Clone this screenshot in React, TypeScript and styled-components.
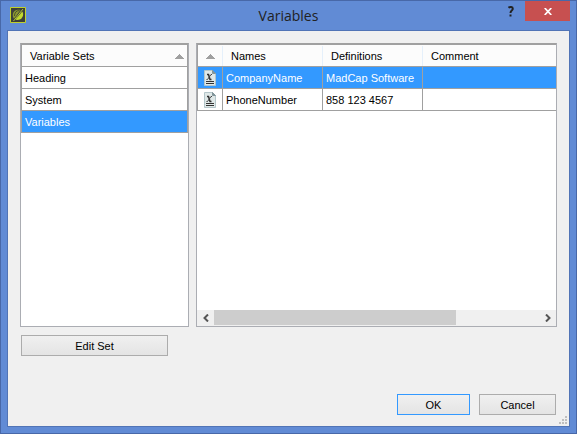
import React, { useState } from "react";
import styled, { createGlobalStyle } from "styled-components";

const GlobalStyle = createGlobalStyle`
  *, *::before, *::after { box-sizing: border-box; }
  body { margin: 0; }
  body, button, table { font-family: "Liberation Sans", Arial, sans-serif; font-size: 11px; line-height: 14px; color: #000; }
`;

const Window = styled.div`
  min-height: 100vh;
  display: flex;
  flex-direction: column;
  background: #618bd5;
  border: 1px solid #4868a8;
  padding: 0 6px 6px;
`;

const TitleBar = styled.header`
  display: grid;
  grid-template-columns: 1fr auto 1fr;
  height: 29px;
`;

const AppMark = styled.svg`
  display: block;
  margin: 6px 0 0 3px;
`;

const Title = styled.h1`
  margin: 0;
  font: 400 14px/29px "Open Sans", "Noto Sans", sans-serif;
  color: #222;
`;

const WindowButtons = styled.div`
  display: flex;
  justify-content: flex-end;
  align-items: flex-start;
`;

const WindowButton = styled.button<{ $close?: boolean }>`
  display: flex;
  align-items: center;
  justify-content: center;
  width: ${(p) => (p.$close ? 45 : 28)}px;
  height: 20px;
  padding: 0;
  border: 0;
  background: ${(p) => (p.$close ? "#c75050" : "transparent")};
`;

const Client = styled.main`
  flex: 1;
  display: flex;
  flex-direction: column;
  background: #f0f0f0;
  border: 1px solid #5174b6;
  padding: 12px 12px 11px 12px;
`;

const Panes = styled.div`
  flex: 1;
  display: flex;
  gap: 7px;
`;

const Pane = styled.section<{ $wide?: boolean }>`
  flex: ${(p) => (p.$wide ? "1 1 0" : "0 0 169px")};
  min-width: 0;
  display: flex;
  flex-direction: column;
  justify-content: space-between;
  background: #fff;
  border: 1px solid #abadb3;
  border-top-color: #a0a0a0;
`;

const Grid = styled.table<{ $wide?: boolean }>`
  width: 100%;
  table-layout: fixed;
  border-spacing: 0;
  border: solid #a0a0a0;
  border-width: 1px ${(p) => (p.$wide ? 0 : 1)}px 0 1px;
`;

const Col = styled.col<{ $width?: number }>`
  width: ${(p) => (p.$width ? `${p.$width}px` : "auto")};
`;

const HeadCell = styled.th`
  height: 22px;
  padding: 1px 3px 0 8px;
  text-align: left;
  font-weight: 400;
  background: linear-gradient(#e5f0fb, #e5f0fb) right 0 top 1px / 1px 100% no-repeat #fcfcfc;
  border-bottom: 1px solid #a0a0a0;
  &:last-child { background: #fcfcfc; }
`;

const HeadContent = styled.div<{ $iconOnly?: boolean }>`
  display: flex;
  align-items: center;
  justify-content: ${(p) => (p.$iconOnly ? "flex-start" : "space-between")};
`;

const Row = styled.tr<{ $selected: boolean }>`
  background: ${(p) => (p.$selected ? "#3399ff" : "#fff")};
  color: ${(p) => (p.$selected ? "#fff" : "#000")};
`;

const Cell = styled.td<{ $icon?: boolean }>`
  height: 22px;
  padding: ${(p) => (p.$icon ? "0 0 0 6px" : "1px 3px 0")};
  white-space: nowrap;
  border: solid #a0a0a0;
  border-width: 0 1px 1px 0;
  &:last-child { border-right: 0; }
`;

const ScrollBar = styled.div`
  display: flex;
  height: 16px;
  padding-bottom: 1px;
  background: #f0f0f0;
`;

const ScrollButton = styled.button`
  width: 17px;
  padding: 0;
  border: 0;
  background: transparent;
  display: flex;
  align-items: center;
  justify-content: center;
`;

const Track = styled.div`
  flex: 1;
`;

const Thumb = styled.div`
  width: 74.5%;
  height: 100%;
  background: #cdcdcd;
`;

const PushButton = styled.button<{ $width: number; $default?: boolean }>`
  width: ${(p) => p.$width}px;
  height: 21px;
  padding: 0;
  border: 1px solid ${(p) => (p.$default ? "#3399ff" : "#acacac")};
  background: linear-gradient(#f0f0f0, #e4e4e4);
`;

const SetActions = styled.div`
  padding: 8px 0 0 1px;
`;

const DialogActions = styled.footer`
  display: flex;
  justify-content: flex-end;
  gap: 9px;
  margin-top: 38px;
  padding-right: 1px;
  position: relative;
`;

const Grip = styled.svg`
  position: absolute;
  right: -10px;
  bottom: -9px;
`;

const SortArrow = () => (
  <svg width="9" height="5" viewBox="0 0 9 5" aria-hidden="true" shapeRendering="crispEdges">
    <path d="M4 0h1v1h1v1h1v1h1v1h1v1H0V4h1V3h1V2h1V1h1z" fill="#a0a0a0" />
  </svg>
);

const VariableIcon = () => (
  <svg width="12" height="16" viewBox="0 0 12 16" aria-hidden="true" display="block">
    <path d="M.5.5h8l3 3v12H.5z" fill="#dfe8e8" stroke="#b4c6ca" />
    <path d="M8.500.5v3h3z" fill="#82969b" stroke="#82969b" />
    <path d="M3 4.500h1.500l1.500 5h1.500" stroke="#333" strokeWidth="1.500" fill="none" />
    <path d="M8 4.500H7L3.500 9.500H2.500" stroke="#444" fill="none" />
    <path d="M2 11.500h8M2 13.500h8" stroke="#333" />
  </svg>
);

const Chevron = ({ right }: { right?: boolean }) => (
  <svg width="6" height="8" viewBox="0 0 6 8" aria-hidden="true">
    <path d={right ? "M1 .5L4.500 4L1 7.500" : "M5 .5L1.500 4L5 7.500"} fill="none" stroke="#555" strokeWidth="2" />
  </svg>
);

const sets = ["Heading", "System", "Variables"];
const variables = [
  { name: "CompanyName", definition: "MadCap Software", comment: "" },
  { name: "PhoneNumber", definition: "858 123 4567", comment: "" },
];

export default function App() {
  const [activeSet, setActiveSet] = useState("Variables");
  const [activeName, setActiveName] = useState("CompanyName");

  return (
    <>
      <GlobalStyle />
      <Window>
        <TitleBar>
          <AppMark width="16" height="16" viewBox="0 0 16 16" aria-hidden="true">
            <path d="M.5.5h15v15H.5z" fill="#3c3f3a" stroke="#bfd02c" />
            <path d="M10.500 3C6 2 2.800 4.500 2.800 8c0 1.500.5 2.800 1.200 3.700z" fill="#8d992f" />
            <path d="M9.500 3.500C6 3.500 4.500 6 4.500 9" fill="none" stroke="#4b5130" />
            <path d="M12.300 4.500c2.200 3.500 0 8.500-5.300 8.500-.8 0-1.200-.2-1.500-.5z" fill="#c3d82e" />
            <path d="M13 2L3.500 14" stroke="#b3c52e" />
          </AppMark>
          <Title>Variables</Title>
          <WindowButtons>
            <WindowButton aria-label="Help">
              <svg width="8" height="11" viewBox="0 0 8 11" aria-hidden="true">
                <path d="M1.500 1.800C3 .6 5.800.8 5.800 2.800C5.800 4.700 3.500 4.500 3.500 7" fill="none" stroke="#222" strokeWidth="2" />
                <path d="M2.500 8.500h2v2h-2z" fill="#222" />
              </svg>
            </WindowButton>
            <WindowButton $close aria-label="Close">
              <svg width="8" height="7" viewBox="0 0 8 7" aria-hidden="true">
                <path d="M.7 0L7.300 7M7.300 0L.7 7" stroke="#fff" strokeWidth="1.700" />
              </svg>
            </WindowButton>
          </WindowButtons>
        </TitleBar>
        <Client>
          <Panes>
            <Pane>
              <Grid>
                <thead>
                  <tr>
                    <HeadCell>
                      <HeadContent>Variable Sets<SortArrow /></HeadContent>
                    </HeadCell>
                  </tr>
                </thead>
                <tbody>
                  {sets.map((name) => (
                    <Row key={name} $selected={name === activeSet} onClick={() => setActiveSet(name)}>
                      <Cell>{name}</Cell>
                    </Row>
                  ))}
                </tbody>
              </Grid>
            </Pane>
            <Pane $wide>
              <Grid $wide>
                <colgroup>
                  <Col $width={25} />
                  <Col $width={100} />
                  <Col $width={100} />
                  <Col />
                </colgroup>
                <thead>
                  <tr>
                    <HeadCell aria-label="Type">
                      <HeadContent $iconOnly><SortArrow /></HeadContent>
                    </HeadCell>
                    <HeadCell>Names</HeadCell>
                    <HeadCell>Definitions</HeadCell>
                    <HeadCell>Comment</HeadCell>
                  </tr>
                </thead>
                <tbody>
                  {variables.map((v) => (
                    <Row key={v.name} $selected={v.name === activeName} onClick={() => setActiveName(v.name)}>
                      <Cell $icon><VariableIcon /></Cell>
                      <Cell>{v.name}</Cell>
                      <Cell>{v.definition}</Cell>
                      <Cell>{v.comment}</Cell>
                    </Row>
                  ))}
                </tbody>
              </Grid>
              <ScrollBar>
                <ScrollButton aria-label="Scroll left"><Chevron /></ScrollButton>
                <Track><Thumb /></Track>
                <ScrollButton aria-label="Scroll right"><Chevron right /></ScrollButton>
              </ScrollBar>
            </Pane>
          </Panes>
          <SetActions>
            <PushButton $width={147}>Edit Set</PushButton>
          </SetActions>
          <DialogActions>
            <PushButton $width={73} $default>OK</PushButton>
            <PushButton $width={77}>Cancel</PushButton>
            <Grip width="8" height="8" viewBox="0 0 8 8" aria-hidden="true">
              <path d="M6 0h2v2H6zM3 3h2v2H3zM6 3h2v2H6zM0 6h2v2H0zM3 6h2v2H3zM6 6h2v2H6z" fill="#bfbfbf" />
            </Grip>
          </DialogActions>
        </Client>
      </Window>
    </>
  );
}
